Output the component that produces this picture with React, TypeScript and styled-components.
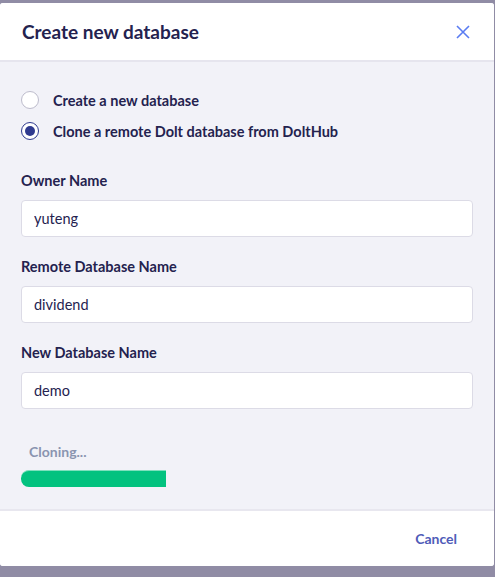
import styled, { createGlobalStyle } from "styled-components";

const GlobalStyle = createGlobalStyle`
	html, body {
		margin: 0;
		padding: 0;
		background: #908ca5;
		font-family: Lato, "Open Sans", sans-serif;
	}
	* {
		box-sizing: border-box;
	}
`;

const Overlay = styled.div`
	width: 495px;
	height: 577px;
	padding: 3px 1px 11px 0;
	background: #908ca5;
`;

const Modal = styled.div`
	display: flex;
	flex-direction: column;
	height: 100%;
	background: #f2f2f8;
	border-radius: 3px;
	overflow: hidden;
`;

const Header = styled.div`
	display: flex;
	align-items: center;
	justify-content: space-between;
	height: 59px;
	padding: 0 22px;
	background: #fff;
	border-bottom: 2px solid #e6e5ee;
`;

const Title = styled.h2`
	margin: 0;
	font-size: 19px;
	font-weight: 700;
	color: #24224f;
`;

const CloseButton = styled.button`
	display: flex;
	align-items: center;
	justify-content: center;
	padding: 0;
	margin-right: 2px;
	border: none;
	background: none;
	cursor: pointer;
	svg {
		width: 14px;
		height: 14px;
	}
`;

const Body = styled.div`
	flex: 1;
	padding: 29px 21px 0 21px;
`;

const RadioList = styled.div`
	display: flex;
	flex-direction: column;
	gap: 13px;
	margin-bottom: 32px;
`;

const RadioRow = styled.label`
	display: flex;
	align-items: center;
	gap: 14px;
	font-size: 14.5px;
	font-weight: 700;
	color: #24224f;
	cursor: pointer;
`;

const RadioCircle = styled.span<{ $checked: boolean }>`
	width: 18px;
	height: 18px;
	border-radius: 50%;
	background: #fff;
	border: 1.5px solid ${(props) => (props.$checked ? "#2f3a8f" : "#bdbccc")};
	display: flex;
	align-items: center;
	justify-content: center;
	&::after {
		content: "";
		display: ${(props) => (props.$checked ? "block" : "none")};
		width: 10px;
		height: 10px;
		border-radius: 50%;
		background: #2f3a8f;
	}
`;

const Field = styled.div`
	display: flex;
	flex-direction: column;
	margin-bottom: 21px;
`;

const Label = styled.span`
	font-size: 14.5px;
	font-weight: 700;
	color: #24224f;
	margin-bottom: 11px;
`;

const Input = styled.input`
	height: 37px;
	width: 452px;
	padding: 0 12px;
	background: #fff;
	border: 1px solid #dcdbe6;
	border-radius: 4px;
	font-family: Lato, "Open Sans", sans-serif;
	font-size: 14.5px;
	color: #24224f;
	outline: none;
`;

const Status = styled.div`
	margin-top: 34px;
	margin-left: 8px;
	font-size: 14px;
	font-weight: 700;
	color: #8a94b0;
`;

const ProgressTrack = styled.div`
	margin-top: 10px;
	height: 17px;
	width: 145px;
`;

const ProgressFill = styled.div`
	height: 100%;
	background: #03c27f;
	border-radius: 8px 0 0 8px;
	border-top: 1px solid #7fe0bd;
`;

const Footer = styled.div`
	display: flex;
	align-items: center;
	justify-content: flex-end;
	height: 57px;
	padding: 0 37px;
	background: #fff;
	border-top: 2px solid #e8e7ef;
`;

const CancelButton = styled.button`
	border: none;
	background: none;
	padding: 0;
	font-family: Lato, "Open Sans", sans-serif;
	font-size: 14px;
	font-weight: 700;
	color: #4f5bb8;
	cursor: pointer;
`;

const fields = [
	{ label: "Owner Name", value: "yuteng" },
	{ label: "Remote Database Name", value: "dividend" },
	{ label: "New Database Name", value: "demo" },
];

export default function App() {
	return (
		<>
			<GlobalStyle />
			<Overlay>
				<Modal>
					<Header>
						<Title>Create new database</Title>
						<CloseButton aria-label="close">
							<svg viewBox="0 0 14 14" fill="none" stroke="#5a7cf2" strokeWidth={1.6}>
								<path d="M1 1 L13 13 M13 1 L1 13" />
							</svg>
						</CloseButton>
					</Header>
					<Body>
						<RadioList>
							<RadioRow>
								<RadioCircle $checked={false} />
								Create a new database
							</RadioRow>
							<RadioRow>
								<RadioCircle $checked={true} />
								Clone a remote Dolt database from DoltHub
							</RadioRow>
						</RadioList>
						{fields.map((f) => (
							<Field key={f.label}>
								<Label>{f.label}</Label>
								<Input defaultValue={f.value} />
							</Field>
						))}
						<Status>Cloning...</Status>
						<ProgressTrack>
							<ProgressFill style={{ width: "100%" }} />
						</ProgressTrack>
					</Body>
					<Footer>
						<CancelButton>Cancel</CancelButton>
					</Footer>
				</Modal>
			</Overlay>
		</>
	);
}
